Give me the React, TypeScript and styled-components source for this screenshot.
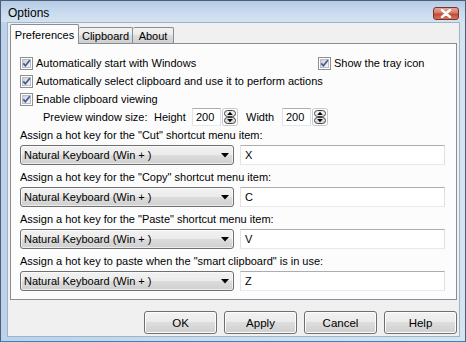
import React, { useId } from 'react';
import styled, { createGlobalStyle } from 'styled-components';

const GlobalStyle = createGlobalStyle`
  html, body {
    margin: 0;
    padding: 0;
    background: #fff;
  }
  body {
    font-family: "Liberation Sans", Arial, sans-serif;
    font-size: 11px;
    color: #000;
  }
`;

const CheckBox: React.FC = () => {
  const id = useId();
  return (
    <svg width="13" height="13" viewBox="0 0 13 13">
      <defs>
        <linearGradient id={id} x1="0" y1="0" x2="1" y2="1">
          <stop offset="0" stopColor="#cbcfd5" />
          <stop offset="1" stopColor="#f7f7f7" />
        </linearGradient>
      </defs>
      <rect x="0.5" y="0.5" width="12" height="12" fill="#fff" stroke="#8e8f8f" />
      <rect x="2.5" y="2.5" width="8" height="8" fill={`url(#${id})`} stroke="#b8bcc4" />
      <path d="M3.3 6.4 L5.4 8.8 L9.8 3.3" fill="none" stroke="#44579a" strokeWidth="1.7" />
    </svg>
  );
};

const Spinner: React.FC = () => (
  <svg width="16" height="18" viewBox="0 0 16 18">
    <rect x="0.5" y="0.5" width="15" height="17" rx="2" fill="#fff" stroke="#c5c7cc" />
    <rect x="2.5" y="2.5" width="11" height="6" rx="3" fill="#ececec" stroke="#444" />
    <rect x="2.5" y="9.5" width="11" height="6" rx="3" fill="#dcdcdc" stroke="#444" />
    <path d="M8 3.8 L5.2 7 L10.8 7 Z" fill="#000" />
    <path d="M5.2 11 L10.8 11 L8 14.2 Z" fill="#000" />
  </svg>
);

const hotKeys = [
  { label: 'Assign a hot key for the "Cut" shortcut menu item:', key: 'X' },
  { label: 'Assign a hot key for the "Copy" shortcut menu item:', key: 'C' },
  { label: 'Assign a hot key for the "Paste" shortcut menu item:', key: 'V' },
  { label: 'Assign a hot key to paste when the "smart clipboard" is in use:', key: 'Z' },
];

const App: React.FC = () => {
  return (
    <>
      <GlobalStyle />
      <StyledWindow>
        <StyledTitleBar>
          <StyledTitle>Options</StyledTitle>
          <StyledClose>
            <svg width="12" height="9" viewBox="0 0 12 9">
              <path d="M2 1 L10 8 M10 1 L2 8" stroke="#fff" strokeWidth="2.4" strokeLinecap="round" />
            </svg>
          </StyledClose>
        </StyledTitleBar>
        <StyledFrame>
          <StyledClient>
            <StyledTabStrip>
              <StyledTab active width={69}>Preferences</StyledTab>
              <StyledTab width={54}>Clipboard</StyledTab>
              <StyledTab width={41}>About</StyledTab>
            </StyledTabStrip>
            <StyledPanel>
              <StyledCheckRow>
                <StyledCheckItem basis={298}>
                  <CheckBox />
                  <span>Automatically start with Windows</span>
                </StyledCheckItem>
                <StyledCheckItem>
                  <CheckBox />
                  <span>Show the tray icon</span>
                </StyledCheckItem>
              </StyledCheckRow>
              <StyledCheckRow>
                <StyledCheckItem>
                  <CheckBox />
                  <span>Automatically select clipboard and use it to perform actions</span>
                </StyledCheckItem>
              </StyledCheckRow>
              <StyledCheckRow>
                <StyledCheckItem>
                  <CheckBox />
                  <span>Enable clipboard viewing</span>
                </StyledCheckItem>
              </StyledCheckRow>
              <StyledPreviewRow>
                <StyledFieldLabel width={111}>Preview window size:</StyledFieldLabel>
                <StyledFieldLabel width={38}>Height</StyledFieldLabel>
                <StyledNumber>200</StyledNumber>
                <Spinner />
                <StyledFieldLabel width={36} gap={8}>
                  Width
                </StyledFieldLabel>
                <StyledNumber>200</StyledNumber>
                <Spinner />
              </StyledPreviewRow>
              {hotKeys.map((item) => (
                <StyledGroup key={item.key}>
                  <StyledGroupLabel>{item.label}</StyledGroupLabel>
                  <StyledControls>
                    <StyledCombo>
                      <span>Natural Keyboard (Win + )</span>
                      <svg width="8" height="5" viewBox="0 0 8 5">
                        <path d="M0 0 L8 0 L4 4.5 Z" fill="#000" />
                      </svg>
                    </StyledCombo>
                    <StyledTextBox>{item.key}</StyledTextBox>
                  </StyledControls>
                </StyledGroup>
              ))}
            </StyledPanel>
            <StyledButtonRow>
              <StyledButton>OK</StyledButton>
              <StyledButton>Apply</StyledButton>
              <StyledButton>Cancel</StyledButton>
              <StyledButton>Help</StyledButton>
            </StyledButtonRow>
          </StyledClient>
        </StyledFrame>
      </StyledWindow>
    </>
  );
};

export default App;

const vistaGradient = `linear-gradient(#f2f2f2 0%, #ebebeb 49%, #dddddd 50%, #cfcfcf 100%)`;

const StyledWindow = styled.div`
  width: 466px;
  height: 342px;
  box-sizing: border-box;
  border: 1px solid #4e5f75;
  border-bottom-color: #2e8bc2;
  background: linear-gradient(90deg, #bcd2ea, #cfdff0 60%, #d6e4f2);
  display: flex;
  flex-direction: column;
`;

const StyledTitleBar = styled.div`
  height: 21px;
  display: flex;
  align-items: flex-start;
  padding: 0 6px 0 7px;
  background: linear-gradient(#b4cbe6, #cbdcef 60%, #d3e2f1);
`;

const StyledTitle = styled.div`
  padding-top: 2px;
  line-height: 21px;
  font-size: 12px;
`;

const StyledClose = styled.div`
  margin-left: auto;
  margin-top: 6px;
  width: 26px;
  height: 13px;
  box-sizing: border-box;
  border: 1px solid #7a3329;
  border-radius: 3px;
  background: linear-gradient(#e6a597 0%, #d37a68 45%, #c2472f 55%, #d5765c 100%);
  display: flex;
  align-items: center;
  justify-content: center;
`;

const StyledFrame = styled.div`
  flex: 1;
  display: flex;
  padding: 0 5px 4px 6px;
`;

const StyledClient = styled.div`
  flex: 1;
  display: flex;
  flex-direction: column;
  border: 1px solid #9fb3cb;
  background: #f0f0f0;
  padding: 1px 2px 2px 2px;
`;

const StyledTabStrip = styled.div`
  display: flex;
  align-items: flex-end;
  height: 20px;
  margin-bottom: -1px;
  position: relative;
  z-index: 1;
`;

const StyledTab = styled.div<{ active?: boolean; width: number }>`
  box-sizing: border-box;
  width: ${(p) => p.width}px;
  height: ${(p) => (p.active ? 20 : 16)}px;
  margin-bottom: ${(p) => (p.active ? 0 : 1)}px;
  border: 1px solid #898c95;
  border-bottom: none;
  border-left-width: ${(p) => (p.active ? 1 : 0)}px;
  border-radius: 2px 2px 0 0;
  background: ${(p) => (p.active ? '#fcfcfc' : vistaGradient)};
  display: flex;
  align-items: center;
  justify-content: center;
  padding-top: ${(p) => (p.active ? 0 : 1)}px;
`;

const StyledPanel = styled.div`
  height: 257px;
  box-sizing: border-box;
  border: 1px solid #898c95;
  background: #fcfcfc;
  padding: 10px 9px 8px 9px;
  display: flex;
  flex-direction: column;
`;

const StyledCheckRow = styled.div`
  display: flex;
  align-items: center;
  height: 18px;
`;

const StyledCheckItem = styled.div<{ basis?: number }>`
  display: flex;
  align-items: center;
  gap: 3px;
  flex: ${(p) => (p.basis ? `0 0 ${p.basis}px` : '0 0 auto')};
  white-space: nowrap;
`;

const StyledPreviewRow = styled.div`
  display: flex;
  align-items: center;
  height: 18px;
  padding-left: 23px;
`;

const StyledFieldLabel = styled.span<{ width: number; gap?: number }>`
  flex: 0 0 ${(p) => p.width}px;
  margin-left: ${(p) => p.gap ?? 0}px;
  white-space: nowrap;
`;

const StyledNumber = styled.div`
  box-sizing: border-box;
  width: 29px;
  height: 18px;
  margin-right: 1px;
  border: 1px solid;
  border-color: #abadb3 #dbdfe6 #e3e9ef #e2e3ea;
  background: #fff;
  padding-left: 3px;
  line-height: 16px;
`;

const StyledGroup = styled.div`
  display: flex;
  flex-direction: column;

  & + & {
    margin-top: 3px;
  }
`;

const StyledGroupLabel = styled.div`
  height: 18px;
  line-height: 18px;
  white-space: nowrap;
`;

const StyledControls = styled.div`
  display: flex;
  gap: 6px;
  margin-top: 1px;
  height: 20px;
`;

const StyledCombo = styled.div`
  box-sizing: border-box;
  width: 214px;
  height: 20px;
  border: 1px solid #707070;
  border-radius: 3px;
  background: ${vistaGradient};
  box-shadow: inset 0 0 0 1px rgba(255, 255, 255, 0.6);
  display: flex;
  align-items: center;
  justify-content: space-between;
  padding: 0 4px 0 3px;
`;

const StyledTextBox = styled.div`
  box-sizing: border-box;
  width: 205px;
  height: 20px;
  border: 1px solid;
  border-color: #abadb3 #dbdfe6 #e3e9ef #e2e3ea;
  background: #fff;
  padding-left: 4px;
  line-height: 18px;
`;

const StyledButtonRow = styled.div`
  display: flex;
  justify-content: flex-end;
  gap: 7px;
  margin-top: 11px;
  height: 23px;
`;

const StyledButton = styled.button`
  box-sizing: border-box;
  width: 73px;
  height: 23px;
  padding: 0;
  border: 1px solid #707070;
  border-radius: 3px;
  background: ${vistaGradient};
  box-shadow: inset 0 0 0 1px #fcfcfc;
  font: inherit;
  font-size: 11.5px;
  color: #000;
`;
